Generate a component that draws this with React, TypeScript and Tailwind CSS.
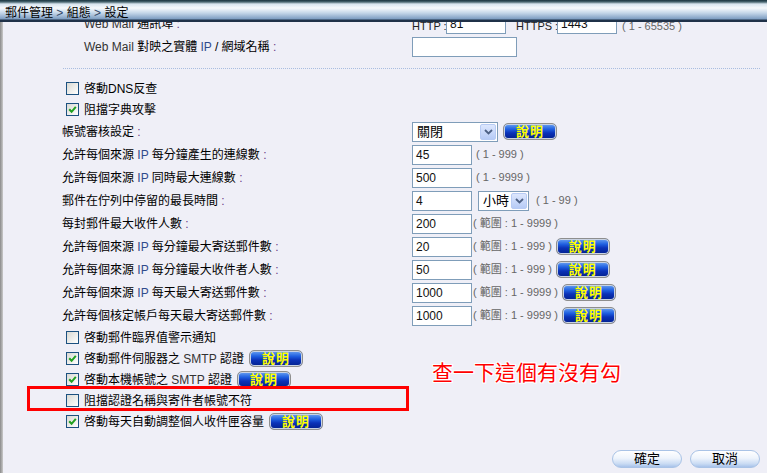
import type { ReactNode } from "react";

function Colon() {
  return <span className="text-[#6b3f86]"> :</span>;
}

function Ip() {
  return <span className="text-[#2f4b8c]"> IP </span>;
}

function Range({ children, className = "" }: { children: ReactNode; className?: string }) {
  return <span className={`shrink-0 whitespace-pre text-[11px] text-[#666] ${className}`}>{children}</span>;
}

function Box({ value, className = "w-[60px]" }: { value?: string; className?: string }) {
  return (
    <div className={`h-[20px] shrink-0 border border-[#7f9db9] bg-white pl-[3px] text-[12px] leading-[18px] text-[#111] ${className}`}>
      {value}
    </div>
  );
}

function Select({ value, className }: { value: string; className: string }) {
  return (
    <div className={`flex h-[20px] shrink-0 items-center justify-between border border-[#7f9db9] bg-white pl-[4px] pr-[1px] ${className}`}>
      <span className="text-[13px] leading-none text-black">{value}</span>
      <span className="flex h-[16px] w-[16px] items-center justify-center rounded-[2px] border border-[#b7cbf4] bg-[linear-gradient(#dde7fd,#b6cbf6)]">
        <svg width="9" height="6" viewBox="0 0 9 6">
          <path d="M1 1 L4.5 4.5 L8 1" stroke="#4d6185" strokeWidth="1.8" fill="none" />
        </svg>
      </span>
    </div>
  );
}

function Help({ className = "" }: { className?: string }) {
  return (
    <span
      className={`flex h-[17px] w-[54px] shrink-0 items-center justify-center rounded-[5px] border border-[#8e8e8e] bg-[linear-gradient(#6aa2f2_0%,#1f5fe0_35%,#0b32b8_60%,#03208e_100%)] shadow-[inset_0_0_0_1px_#c9d3e3] ${className}`}
    >
      <span className="text-[13px] font-bold leading-none tracking-[1px] text-[#ffff00]">說明</span>
    </span>
  );
}

function Check({ on }: { on?: boolean }) {
  return (
    <span className="flex h-[13px] w-[13px] shrink-0 items-center justify-center border border-[#1c5180] bg-[linear-gradient(135deg,#d9d9d3,#ffffff)]">
      {on && (
        <svg width="9" height="9" viewBox="0 0 9 9">
          <path d="M1.2 4.2 L3.6 6.8 L7.8 1.8" stroke="#21a121" strokeWidth="2" fill="none" />
        </svg>
      )}
    </span>
  );
}

function CheckRow({ on, children }: { on?: boolean; children: ReactNode }) {
  return (
    <div className="flex h-[21px] items-center pl-[63px]">
      <Check on={on} />
      <span className="ml-[5px] flex items-center whitespace-nowrap text-black">{children}</span>
    </div>
  );
}

function FieldRow({ label, children }: { label: ReactNode; children?: ReactNode }) {
  return (
    <div className="flex h-[23px] items-center">
      <div className="w-[409px] shrink-0 pl-[59px] text-black">
        {label}
        <Colon />
      </div>
      <div className="flex items-center">{children}</div>
    </div>
  );
}

export default function App() {
  return (
    <div className="relative flex h-[473px] w-[767px] flex-col overflow-hidden bg-[#efeff7] font-['Liberation_Sans','Noto_Sans_CJK_TC',sans-serif] text-[12px]">
      <div className="flex h-[22px] shrink-0 items-center bg-[linear-gradient(to_bottom,#18323d_0px,#4b6872_2px,#d8e5ef_4px,#f6f9fc_8px,#c4d6e8_13px,#7d9dc1_19px,#1f3148_20px,#1f3148_22px)] pl-[5px] pt-[3px] text-[12px] text-black">
        郵件管理<span className="text-[#34486a]">&nbsp;&gt;&nbsp;</span>組態<span className="text-[#34486a]">&nbsp;&gt;&nbsp;</span>設定
      </div>

      <div className="flex min-h-0 flex-1">
        <div className="w-[3px] shrink-0 bg-[linear-gradient(to_right,#8a8a8a,#c9c9c9)]" />
        <div className="relative flex min-w-0 flex-1 flex-col overflow-hidden">
          <div className="-mt-[10px] flex flex-col">
            <div className="flex h-[23px] items-center">
              <div className="w-[409px] shrink-0 pl-[81px] text-black">
                <span className="text-[#333]">Web Mail </span>通訊埠
                <Colon />
              </div>
              <span className="w-[34px] shrink-0 whitespace-nowrap pt-[5px] text-[11px] text-[#222]">HTTP :</span>
              <Box value="81" />
              <span className="ml-[10px] w-[41px] shrink-0 whitespace-nowrap pt-[5px] text-[11px] text-[#222]">HTTPS :</span>
              <Box value="1443" />
              <Range className="ml-[5px] pt-[5px]">( 1 - 65535 )</Range>
            </div>
            <div className="flex h-[23px] items-center">
              <div className="w-[409px] shrink-0 pl-[81px] text-black">
                <span className="text-[#333]">Web Mail </span>對映之實體<Ip />/ 網域名稱
                <Colon />
              </div>
              <Box className="w-[105px]" />
            </div>

            <div className="flex h-[20px] items-center">
              <div className="ml-[60px] w-[697px] border-t border-dotted border-[#a9bde0]" />
            </div>

            <CheckRow>啓動DNS反查</CheckRow>
            <CheckRow on>阻擋字典攻擊</CheckRow>

            <FieldRow label="帳號審核設定">
              <Select value="關閉" className="w-[86px]" />
              <Help className="ml-[5px]" />
            </FieldRow>
            <FieldRow label={<>允許每個來源<Ip />每分鐘產生的連線數</>}>
              <Box value="45" />
              <Range className="ml-[4px]">( 1 - 999 )</Range>
            </FieldRow>
            <FieldRow label={<>允許每個來源<Ip />同時最大連線數</>}>
              <Box value="500" />
              <Range className="ml-[4px]">( 1 - 9999 )</Range>
            </FieldRow>
            <FieldRow label="郵件在佇列中停留的最長時間">
              <Box value="4" />
              <Select value="小時" className="ml-[6px] w-[51px]" />
              <Range className="ml-[7px]">( 1 - 99 )</Range>
            </FieldRow>
            <FieldRow label="每封郵件最大收件人數">
              <Box value="200" />
              <Range className="ml-[1px]">( 範圍 : 1 - 9999 )</Range>
            </FieldRow>
            <FieldRow label={<>允許每個來源<Ip />每分鐘最大寄送郵件數</>}>
              <Box value="20" />
              <Range className="ml-[1px]">( 範圍 : 1 - 999 )</Range>
              <Help className="ml-[4px]" />
            </FieldRow>
            <FieldRow label={<>允許每個來源<Ip />每分鐘最大收件者人數</>}>
              <Box value="50" />
              <Range className="ml-[1px]">( 範圍 : 1 - 999 )</Range>
              <Help className="ml-[4px]" />
            </FieldRow>
            <FieldRow label={<>允許每個來源<Ip />每天最大寄送郵件數</>}>
              <Box value="1000" />
              <Range className="ml-[1px]">( 範圍 : 1 - 9999 )</Range>
              <Help className="ml-[4px]" />
            </FieldRow>
            <FieldRow label="允許每個核定帳戶每天最大寄送郵件數">
              <Box value="1000" />
              <Range className="ml-[1px]">( 範圍 : 1 - 9999 )</Range>
              <Help className="ml-[4px]" />
            </FieldRow>

            <CheckRow>啓動郵件臨界值警示通知</CheckRow>
            <CheckRow on>
              啓動郵件伺服器之<span className="text-[#333]">&nbsp;SMTP&nbsp;</span>認證
              <Help className="ml-[5px]" />
            </CheckRow>
            <CheckRow on>
              啓動本機帳號之<span className="text-[#333]">&nbsp;SMTP&nbsp;</span>認證
              <Help className="ml-[5px]" />
            </CheckRow>
            <div className="relative">
              <CheckRow>阻擋認證名稱與寄件者帳號不符</CheckRow>
              <div className="absolute left-[24px] top-[-4px] h-[25px] w-[382px] border-[3px] border-[#ff0000]" />
            </div>
            <CheckRow on>
              啓動每天自動調整個人收件匣容量
              <Help className="ml-[5px]" />
            </CheckRow>

            <div className="mt-[18px] flex justify-end gap-[8px] pr-[7px]">
              <span className="flex h-[18px] w-[70px] items-center justify-center rounded-full border border-[#a9c3e6] bg-[linear-gradient(#ffffff_0%,#eef4fc_45%,#c9dbf3_80%,#a7c2ea_100%)] text-[13px] text-black">
                確定
              </span>
              <span className="flex h-[18px] w-[70px] items-center justify-center rounded-full border border-[#a9c3e6] bg-[linear-gradient(#ffffff_0%,#eef4fc_45%,#c9dbf3_80%,#a7c2ea_100%)] text-[13px] text-black">
                取消
              </span>
            </div>
          </div>
        </div>
      </div>

      <div className="absolute left-[432px] top-[361px] text-[21px] leading-[24px] text-[#ff0000] [text-shadow:1px_0_#fff,-1px_0_#fff,0_1px_#fff,0_-1px_#fff,1px_1px_#fff,-1px_-1px_#fff,1px_-1px_#fff,-1px_1px_#fff]">
        查一下這個有沒有勾
      </div>
    </div>
  );
}
